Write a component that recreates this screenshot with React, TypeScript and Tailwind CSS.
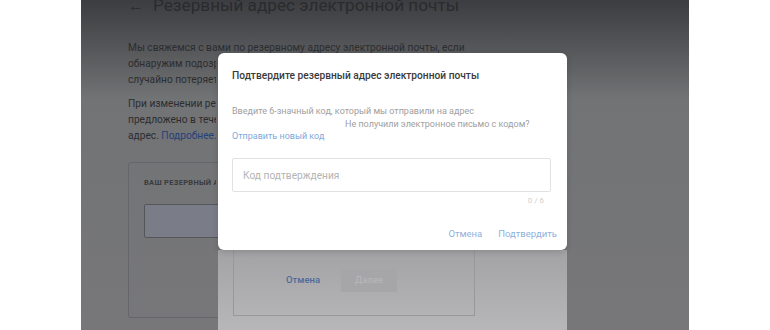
export default function App() {
  return (
    <div
      className="flex h-[330px] w-[770px] overflow-hidden bg-white"
      style={{ fontFamily: "Roboto, 'Liberation Sans', sans-serif" }}
    >
      <div className="w-[81px] shrink-0" />

      {/* dimmed settings page */}
      <div className="relative w-[608px] shrink-0 overflow-hidden bg-gradient-to-b from-[#3c3d40] via-[#727375] via-30% to-[#777779]">
        <div className="pl-[47px]">
          <div className="-mt-[7px] flex h-[26px] items-center gap-[9px]">
            <span className="text-[16px] text-[#2a2b2d]">←</span>
            <h1 className="whitespace-nowrap text-[17.2px] text-[#2a2b2d]">Резервный адрес электронной почты</h1>
          </div>

          <div className="mt-[21px] whitespace-nowrap text-[10.2px] leading-[16px] text-[#2c2d2f]">
            <p>Мы свяжемся с вами по резервному адресу электронной почты, если</p>
            <p className="w-[88px] overflow-hidden">обнаружим подозрительные</p>
            <p className="w-[88px] overflow-hidden">случайно потеряете</p>
          </div>

          <div className="mt-[8px] w-[88px] overflow-hidden whitespace-nowrap text-[10.2px] leading-[16px] text-[#2c2d2f]">
            <p>При изменении резервного</p>
            <p>предложено в течение</p>
            <p>
              адрес. <span className="text-[#24417a]">Подробнее.</span>
            </p>
          </div>

          <div className="mt-[18px] h-[156px] w-[345px] rounded-[3px] border border-[#65666a] pl-[15px] pt-[14px]">
            <div className="w-[72px] overflow-hidden whitespace-nowrap text-[7.5px] font-bold tracking-[0.3px] text-[#3a3b3d]">
              ВАШ РЕЗЕРВНЫЙ АДРЕС
            </div>
            <div className="mt-[16px] h-[34px] w-[300px] rounded-[2px] border border-[#55565a] bg-[#7a7c88]" />
          </div>
        </div>

        {/* ghost strip below dialog */}
        <div className="absolute left-[137px] top-[250px] h-[80px] w-[349px] bg-gradient-to-b from-[#a3a3a5] to-[#b7b7b9]">
          <div className="ml-[15px] h-[66px] w-[242px] border-x border-b border-[#98989a]">
            <div className="flex items-center pl-[52px] pt-[19px]">
              <span className="text-[9.5px] font-medium text-[#4d6a9c]">Отмена</span>
              <span className="ml-[21px] flex h-[23px] w-[56px] items-center justify-center bg-[#a6a6a8] text-[9.5px] text-[#b9b9bb]">
                Далее
              </span>
            </div>
          </div>
        </div>

        {/* dialog */}
        <div className="absolute left-[137px] top-[53px] h-[197px] w-[349px] rounded-[6px] bg-white shadow-[0_2px_6px_rgba(0,0,0,0.15)]">
          <div className="px-[14px] pt-[15px]">
            <div className="text-[10.2px] font-medium text-[#3a3a3a]">
              Подтвердите резервный адрес электронной почты
            </div>

            <div className="mt-[22px] text-[9px] leading-[13px] text-[#a0a0a0]">
              <div>Введите 6-значный код, который мы отправили на адрес</div>
              <div className="pl-[113px]">Не получили электронное письмо с кодом?</div>
              <div className="mt-[-1px] text-[#7eaadb]">Отправить новый код</div>
            </div>

            <div className="mt-[15px] flex h-[34px] w-[319px] items-center rounded-[2px] border border-[#e2e2e2] pl-[10px] text-[10.2px] text-[#b4b4b4]">
              Код подтверждения
            </div>
            <div className="mt-[3px] pr-[9px] text-right text-[8px] text-[#cfcfcf]">0 / 6</div>

            <div className="mt-[20px] flex justify-end gap-[16px] text-[9.5px] text-[#8fb1db]">
              <span>Отмена</span>
              <span className="-mr-[4px]">Подтвердить</span>
            </div>
          </div>
        </div>
      </div>

      <div className="flex-1" />
    </div>
  );
}
